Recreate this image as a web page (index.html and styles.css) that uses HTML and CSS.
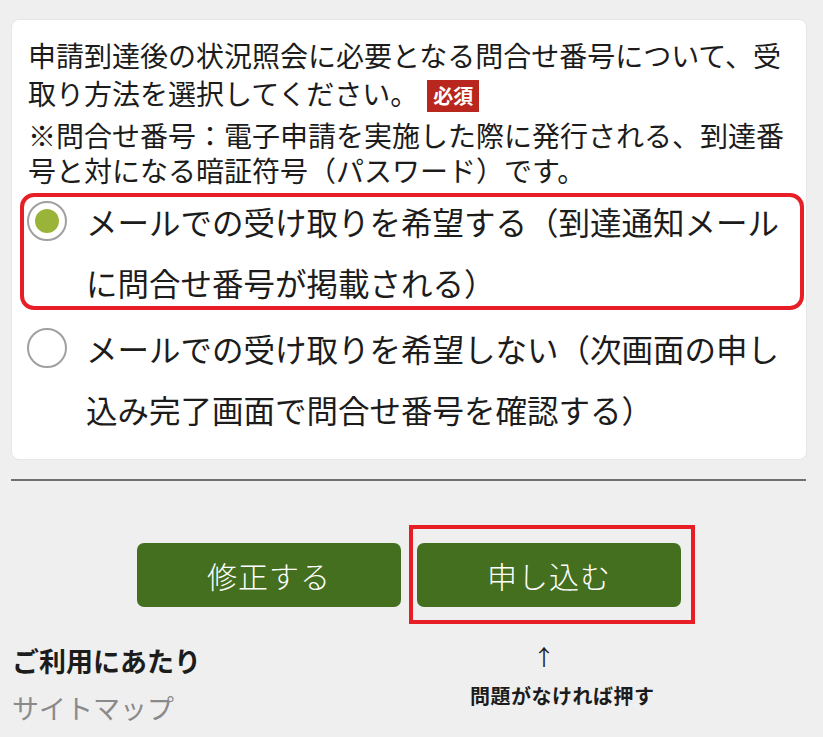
FILE: index.html
```html
<!DOCTYPE html>
<html lang="ja">

<head>
  <meta charset="UTF-8">
  <meta name="viewport" content="width=device-width, initial-scale=1.0">
  <title>申込内容の確認</title>
  <link rel="stylesheet" href="styles.css">
</head>

<body>

  <div class="page">
    <div class="card">
      <p class="question">申請到達後の状況照会に必要となる問合せ番号について、受取り方法を選択してください。<span class="required">必須</span></p>
      <p class="note">※問合せ番号：電子申請を実施した際に発行される、到達番号と対になる暗証符号（パスワード）です。</p>

      <div class="choices">
        <div class="choice marked">
          <span class="radio checked"></span>
          <span class="choice-text">メールでの受け取りを希望する（到達通知メールに問合せ番号が掲載される）</span>
        </div>
        <div class="choice">
          <span class="radio"></span>
          <span class="choice-text">メールでの受け取りを希望しない（次画面の申し込み完了画面で問合せ番号を確認する）</span>
        </div>
      </div>
    </div>

    <hr class="divider">

    <div class="actions">
      <button class="btn">修正する</button>
      <div class="btn-wrap marked-box">
        <button class="btn">申し込む</button>
      </div>
    </div>

    <div class="footer">
      <ul class="footer-links">
        <li class="footer-title">ご利用にあたり</li>
        <li class="footer-link">サイトマップ</li>
      </ul>
      <div class="hint">
        <span class="hint-arrow">↑</span>
        <span class="hint-text">問題がなければ押す</span>
      </div>
    </div>
  </div>

</body>

</html>
```

FILE: styles.css
```css
body {
  font-family: "Noto Sans CJK JP", "Noto Sans", sans-serif;
  background: #efefef;
  color: #1c1c1c;
  margin: 0;
  padding: 0;
}

.page {
  padding: 19px 16px 0 11px;
}

.card {
  background-color: #fff;
  border: 1px solid #e6e6e6;
  border-radius: 8px;
  padding: 16px 15px 19px 16px;
}

.question {
  margin: 0;
  font-size: 28px;
  line-height: 38px;
}

.required {
  display: inline-block;
  position: relative;
  top: 6px;
  margin-left: 9px;
  width: 52px;
  height: 32px;
  line-height: 32px;
  background-color: #b8261e;
  color: #fff;
  font-size: 20px;
  font-weight: bold;
  text-align: center;
  vertical-align: top;
}

.note {
  margin: 6px 0 0;
  font-size: 28px;
  line-height: 35px;
}

.choices {
  margin-top: 3px;
  display: flex;
  flex-direction: column;
  gap: 5px;
}

.choice {
  position: relative;
  display: flex;
  align-items: flex-start;
}

/* annotation frame around the chosen option */
.choice.marked::after {
  content: "";
  position: absolute;
  top: 2px;
  bottom: 3px;
  left: -8px;
  right: -13px;
  border: 4px solid #e81e26;
  border-radius: 14px;
}

.radio {
  flex: none;
  box-sizing: border-box;
  width: 40px;
  height: 40px;
  margin: 10px 0 0 -1px;
  border: 2px solid #a0a0a0;
  border-radius: 50%;
  display: flex;
  align-items: center;
  justify-content: center;
}

.radio.checked::before {
  content: "";
  width: 24px;
  height: 24px;
  border-radius: 50%;
  background-color: #9ab439;
}

.choice-text {
  margin-left: 19px;
  font-size: 31.5px;
  line-height: 61px;
}

.divider {
  margin: 19px 1px 0 0;
  border: none;
  border-top: 2px solid #707070;
}

.actions {
  margin-top: 62px;
  display: flex;
  justify-content: center;
  gap: 16px;
}

.btn {
  width: 264px;
  height: 64px;
  border: none;
  border-radius: 7px;
  background-color: #436f1f;
  color: #fff;
  font-family: inherit;
  font-size: 30px;
  font-weight: 300;
  letter-spacing: 1px;
  cursor: pointer;
}

.btn-wrap {
  position: relative;
}

/* annotation frame around the submit button */
.marked-box::after {
  content: "";
  position: absolute;
  top: -18px;
  bottom: -17px;
  left: -8px;
  right: -14px;
  border: 4px solid #e81e26;
}

.footer {
  margin-top: 30px;
  display: flex;
  padding-left: 1px;
}

.footer-links {
  list-style: none;
  margin: 0;
  padding: 0;
  width: 458px;
  font-size: 27px;
  line-height: 47px;
}

.footer-title {
  font-weight: bold;
}

.footer-link {
  color: #8a8a8a;
}

.hint {
  margin-top: 6px;
  display: flex;
  flex-direction: column;
}

.hint-arrow {
  padding-left: 63px;
  font-size: 22px;
  line-height: 24px;
}

.hint-text {
  margin-top: 15px;
  font-size: 20px;
  font-weight: bold;
  line-height: 28px;
  letter-spacing: 0.5px;
}
```
